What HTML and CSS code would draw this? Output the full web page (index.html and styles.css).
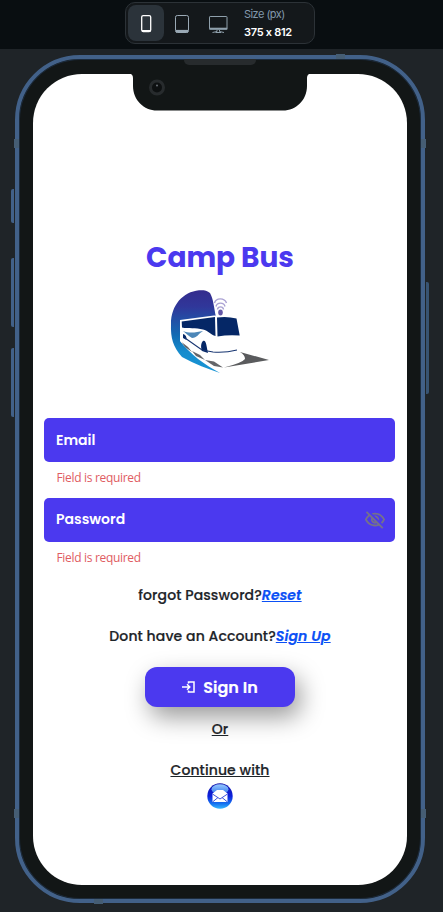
FILE: index.html
```html
<!DOCTYPE html>
<html lang="en">
<head>
<meta charset="utf-8">
<title>Camp Bus</title>
<link rel="stylesheet" href="styles.css">
</head>
<body>
<header class="topbar">
  <div class="devices">
    <button class="device active" aria-label="Phone">
      <svg width="36" height="36" viewBox="0 0 36 36" fill="none" stroke="#fff" stroke-width="1.3"><rect x="13.7" y="10.6" width="9" height="16" rx="1.5"/><path d="M14 26h8.500" stroke-width="2"/></svg>
    </button>
    <button class="device" aria-label="Tablet">
      <svg width="36" height="36" viewBox="0 0 36 36" fill="none" stroke="#9aa9b5" stroke-width="1"><rect x="11.5" y="10.5" width="13" height="17" rx="1.8"/><path d="M12 26.2h12" stroke-width="2.6"/></svg>
    </button>
    <button class="device" aria-label="Desktop">
      <svg width="36" height="36" viewBox="0 0 36 36" fill="none" stroke="#8fa0ac" stroke-width="1"><rect x="9.5" y="11.5" width="17.500" height="12.5" rx=".6"/><path d="M9.3 23.7h18" stroke-width="2"/><path d="M17 25v1.500l-4.500 1M19.500 25v1.500l4.500 1M15.500 27.500h5.500"/></svg>
    </button>
    <div class="size"><span class="size-label">Size (px)</span><span class="size-value">375 x 812</span></div>
  </div>
</header>
<main class="stage">
  <div class="phone">
    <i class="key mute"></i><i class="key up"></i><i class="key down"></i><i class="key power"></i>
    <i class="band b1"></i><i class="band b2"></i><i class="band b3"></i><i class="band b4"></i><i class="band b5"></i><i class="band b6"></i>
    <i class="speaker"></i>
    <svg class="notch" width="190" height="40" viewBox="0 0 190 40"><path d="M0 0H190V1.700H186Q182 1.700 182 6V14C182 28 171 38.500 158 38.500H32C19 38.500 8 28 8 14V6Q8 1.700 4 1.700H0Z" fill="#121616"/><circle cx="32" cy="15.500" r="6.500" fill="#0d1011" stroke="#272b2d" stroke-width="3"/><circle cx="32" cy="13.500" r="1" fill="#697075"/></svg>
    <div class="screen">
      <h1>Camp Bus</h1>
      <svg class="logo" width="100" height="86" viewBox="0 0 100 86">
        <defs><linearGradient id="sky" x1="0" y1="0" x2="0" y2="1"><stop offset="0" stop-color="#342c8d"/><stop offset=".2" stop-color="#30379a"/><stop offset=".55" stop-color="#126cb4"/><stop offset=".75" stop-color="#168dce"/><stop offset="1" stop-color="#1994d4"/></linearGradient></defs>
        <path d="M46 27C44 18 43.500 9 40 3C37 0 32 0 29 .3C13 2 1 15 1 34C.5 48 3 57 12 67C25 74 38 79 50 83C35 75 20 64 10 51V31Z" fill="url(#sky)"/>
        <path d="M10 30L44 25.500L68 26.500L71 47L69 61L44 69L33 66L10 50Z" fill="#fff"/>
        <path d="M11.700 31.500L45 27L45.500 46C41 45 38 40.500 33 39.500C26 37.500 18 39 12 37.500Z" fill="#052766"/>
        <path d="M47 27.500Q57 26 66.500 28.500L69.700 45.500Q58 44.500 47.500 46.500Z" fill="#052766"/>
        <path d="M13 41C19 43.500 26 42.500 33 41C28 44 27 48 22 48C18 46 16 43 13 41Z" fill="#4d87b8"/>
        <path d="M33 51C36 49 36.500 56 38 63L32 61C30.500 57 31 53 33 51ZM13 44Q17 45 16.500 50L13 48Z" fill="#052766"/>
        <path d="M15 48L32 60L43 62Q55 63 67 60" fill="none" stroke="#173571" stroke-width="1.100"/>
        <path d="M10 51C20 63 36 72 52 78L62 75L50 70L35 67L17 55Z" fill="#fff"/>
        <path d="M70 62L99 70L54 77.500Q72 73 75 69Q75 65 70 62Z" fill="#5a5b5d"/>
        <path d="M11.500 52L15 57L22 62L18 57ZM22 61L26 66L35 70L30 65ZM35 70L44 76L53 77.500L44 71.500Z" fill="#646569"/>
        <g fill="none" stroke="#aaa1d3" stroke-width="1.400"><path d="M44.500 13C46 7.500 54.500 7.500 56.500 13M46 16.500C47 12 54 12 55 16.500M47.500 19.500C48 16 53 16 53.500 19.500"/></g>
        <ellipse cx="50.500" cy="22.500" rx="2.300" ry="3" fill="#6558a7"/>
      </svg>
      <form class="form">
        <div class="field"><span>Email</span></div>
        <p class="error">Field is required</p>
        <div class="field"><span>Password</span>
          <svg width="22" height="22" viewBox="0 0 24 24" fill="#75718b"><path d="M12 6c3.790 0 7.170 2.130 8.820 5.500-.590 1.220-1.420 2.270-2.410 3.120l1.410 1.410c1.390-1.230 2.490-2.770 3.180-4.530C21.270 7.110 17 4 12 4c-1.270 0-2.490.200-3.640.570l1.650 1.650C10.660 6.090 11.320 6 12 6zm-1.070 1.140L13 9.210c.570.250 1.030.710 1.280 1.280l2.070 2.070c.080-.340.140-.700.140-1.070C16.500 9.010 14.480 7 12 7c-.370 0-.720.050-1.070.140zM2.010 3.870l2.680 2.680C3.060 7.830 1.770 9.530 1 11.500 2.730 15.890 7 19 12 19c1.520 0 2.980-.290 4.320-.820l3.420 3.420 1.410-1.410L3.420 2.450 2.010 3.870zm7.500 7.500l2.610 2.610c-.040.010-.080.020-.120.020-1.380 0-2.500-1.120-2.500-2.500 0-.050.010-.080.010-.130zm-3.400-3.400l1.750 1.750c-.230.550-.360 1.150-.360 1.780 0 2.480 2.020 4.500 4.500 4.500.630 0 1.230-.130 1.770-.360l.980.980c-.880.240-1.800.380-2.750.380-3.790 0-7.170-2.130-8.820-5.500.700-1.430 1.720-2.610 2.930-3.530z"/></svg>
        </div>
        <p class="error">Field is required</p>
      </form>
      <p class="line forgot"><span>forgot Password?</span><a>Reset</a></p>
      <p class="line signup"><span>Dont have an Account?</span><a>Sign Up</a></p>
      <button class="signin"><svg width="13" height="12" viewBox="0 0 13 12" fill="none" stroke="#fff" stroke-width="1.500"><path d="M0 6h7.500M5 3.200 7.800 6 5 8.800M6.500 2.500V1h5.500v10H6.500V9.500"/></svg><span>Sign In</span></button>
      <p class="line or">Or</p>
      <p class="line continue">Continue with</p>
      <svg class="mail" width="26" height="26" viewBox="0 0 26 26"><defs><linearGradient id="ball" x1="0" y1="0" x2="0" y2="1"><stop offset="0" stop-color="#1515a7"/><stop offset=".5" stop-color="#0c20dc"/><stop offset=".8" stop-color="#1672ef"/><stop offset="1" stop-color="#35b7ff"/></linearGradient><linearGradient id="shine" x1="0" y1="0" x2="0" y2="1"><stop offset="0" stop-color="#95c8ff"/><stop offset="1" stop-color="#3276ed"/></linearGradient></defs><circle cx="13" cy="13" r="12.700" fill="url(#ball)"/><ellipse cx="13" cy="6.300" rx="8.500" ry="5" fill="url(#shine)"/><path d="M5.500 10.500 10 7H16L20.500 10.500V19H5.500Z" fill="#fff"/><path d="M5.500 11 13 16 20.500 11M5.500 19 11 14.500M20.500 19 15 14.500" fill="none" stroke="#3c54db" stroke-width="1"/></svg>
    </div>
  </div>
</main>
</body>
</html>
```
FILE: styles.css
```css
* { box-sizing: border-box; }
body { margin: 0; width: 443px; height: 912px; overflow: hidden; background: #1f2428; font-family: Poppins, Inter, sans-serif; }
button { border: 0; padding: 0; font: inherit; background: none; }
h1, p { margin: 0; }
.topbar { height: 49px; background: #090e11; display: flex; justify-content: center; padding: 2px 3px 0 0; }
.devices { width: 190px; height: 42px; border: 1px solid #2c3237; border-radius: 10px; background: #14181b; display: flex; align-items: center; padding-left: 2px; }
.device { width: 36px; height: 36px; border-radius: 8px; flex: none; }
.device.active { background: #2b333a; }
.device svg { display: block; }
.size { display: flex; flex-direction: column; margin-left: 8px; font: 11px/18px Inter, sans-serif; white-space: nowrap; }
.size-label { color: #8298ad; letter-spacing: -.55px; }
.size-value { color: #fff; font-weight: 600; letter-spacing: -.3px; }
.stage { height: 863px; padding: 6px 0 0 15px; }
.phone { position: relative; width: 410px; height: 848px; border: 4px solid #426189; border-radius: 65px; padding: 14.500px 14px 14px; background: #121616; box-shadow: inset 0 0 0 1px #1c2b3c; }
.screen { width: 374px; height: 811.500px; background: #fff; border-radius: 49px; padding: 163.500px 11.500px 0; display: flex; flex-direction: column; align-items: center; }
.notch { position: absolute; left: 106px; top: 13px; }
.speaker { position: absolute; left: 165px; top: 0; width: 72px; height: 6px; background: #272b2d; border-radius: 0 0 5px 5px; }
.key { position: absolute; width: 3px; background: #426189; border-radius: 2px 0 0 2px; left: -8px; }
.mute { top: 130px; height: 34px; }
.up { top: 199px; height: 69px; }
.down { top: 289px; height: 69px; }
.power { left: 407px; top: 223px; height: 112px; border-radius: 0 2px 2px 0; background: #385473; }
.band { position: absolute; width: 5px; height: 9px; background: #455d74; }
.b1 { left: -5px; top: 80px; }
.b2 { left: -5px; top: 750px; }
.b3 { left: 402px; top: 80px; }
.b4 { left: 402px; top: 750px; }
.b5 { left: 317px; top: -5px; width: 9px; height: 5px; }
.b6 { left: 75px; top: 840px; width: 9px; height: 5px; }
h1 { font-size: 28px; line-height: 41px; font-weight: 700; color: #4b39ef; white-space: nowrap; }
.logo { margin-top: 12px; flex: none; }
.form { width: 351px; margin-top: 42px; margin-right: 1px; }
.field { height: 44px; border-radius: 5px; background: #4b39ef; color: #fff; display: flex; align-items: center; justify-content: space-between; padding: 0 9px 0 12px; font-size: 14px; font-weight: 600; }
.error { height: 35.500px; padding: 7px 12.500px 0; color: #e05c62; font: 12px/18px "Open Sans", sans-serif; letter-spacing: -.32px; }
.line { color: #1d2429; font-size: 14px; line-height: 20px; font-weight: 500; letter-spacing: .1px; white-space: nowrap; -webkit-text-stroke: .2px currentColor; }
.line a { color: #0b50f5; font-weight: 600; font-style: italic; text-decoration: underline; letter-spacing: .1px; }
.forgot { margin-top: 8px; }
.signup { margin-top: 21px; }
.signin { width: 150px; height: 40px; margin-top: 21px; flex: none; border-radius: 12px; background: #4b39ef; color: #fff; font-size: 16px; font-weight: 600; display: flex; align-items: center; justify-content: center; gap: 8px; box-shadow: 5px 10px 25px rgba(0,0,0,.4); -webkit-text-stroke: .2px #fff; }
.or, .continue { text-decoration: underline; position: relative; }
.or { margin-top: 12px; }
.continue { margin-top: 21px; }
.mail { margin-top: 3px; flex: none; }
```
